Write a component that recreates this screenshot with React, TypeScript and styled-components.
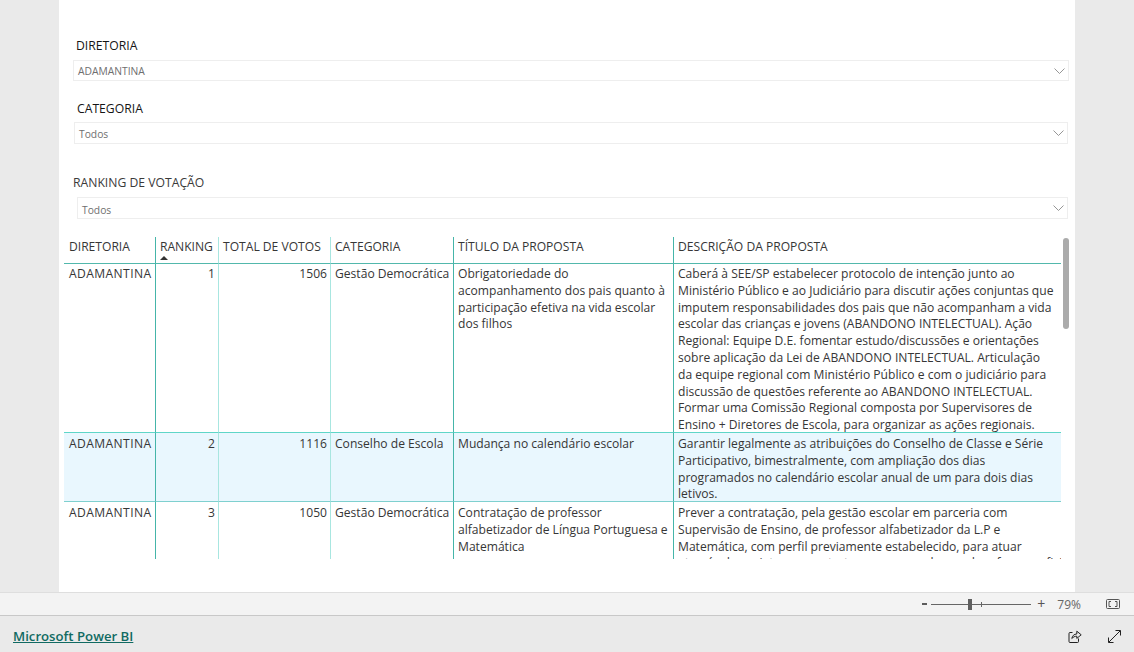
import styled, { createGlobalStyle } from "styled-components";

const GlobalStyle = createGlobalStyle`
  html, body {
    margin: 0;
    padding: 0;
    width: 1134px;
    height: 652px;
    overflow: hidden;
    background: #eaeaea;
    font-family: "Open Sans", "Liberation Sans", sans-serif;
  }
`;

const Shell = styled.div`
  display: flex;
  flex-direction: column;
  width: 1134px;
  height: 652px;
`;

const Stage = styled.main`
  flex: none;
  height: 592px;
  display: flex;
  justify-content: center;
`;

const Canvas = styled.div`
  width: 1016px;
  height: 592px;
  background: #fff;
  box-sizing: border-box;
  padding: 37px 6px 0 5px;
  overflow: hidden;
`;

const Slicer = styled.section<{ $boxLeft: number; $boxRight: number; $gap: number }>`
  margin-bottom: ${(p) => p.$gap}px;
  padding: 0 ${(p) => p.$boxRight}px 0 ${(p) => p.$boxLeft}px;
`;

const SlicerLabel = styled.h3<{ $indent: number; $below: number; $muted?: boolean }>`
  margin: 0 0 ${(p) => p.$below}px ${(p) => p.$indent}px;
  font-size: 12.2px;
  line-height: 17px;
  font-weight: 400;
  color: ${(p) => (p.$muted ? "#3a3a3a" : "#151515")};
  white-space: nowrap;
`;

const SelectBox = styled.div<{ $height: number }>`
  height: ${(p) => p.$height}px;
  box-sizing: border-box;
  border: 1px solid #eeeeee;
  display: flex;
  align-items: center;
  justify-content: space-between;
  padding: 0 3px 0 4px;
  font-size: 10.3px;
  color: #6f6f6f;
`;

const SelectValue = styled.span<{ $drop: number }>`
  padding-top: ${(p) => p.$drop}px;
`;

const Chevron = () => (
  <svg width="11" height="6" viewBox="0 0 11 6" fill="none">
    <path d="M0.5 0.5L5.5 5.5L10.5 0.5" stroke="#8a8a8a" strokeWidth="0.9" />
  </svg>
);

const TableFrame = styled.div`
  position: relative;
  height: 322px;
  width: 1005px;
  overflow: hidden;
`;

const Table = styled.table`
  table-layout: fixed;
  width: 997px;
  border-collapse: separate;
  border-spacing: 0;
  font-size: 12.1px;
  line-height: 16.8px;
  color: #363636;
`;

type LineKind = "dark" | "light" | "none";

const lineFor = (kind: LineKind) =>
  kind === "dark" ? "1px solid #45b5a9" : kind === "light" ? "1px solid #a8e6e0" : "0";

const HeadCell = styled.th<{ $line: LineKind }>`
  height: 27px;
  padding: 2px 3px 0 4px;
  box-sizing: border-box;
  vertical-align: top;
  text-align: left;
  font-weight: 400;
  white-space: nowrap;
  position: relative;
  border-bottom: 1px solid #52b8ac;
  border-right: ${(p) => lineFor(p.$line)};

  &:first-child {
    padding-left: 5px;
  }
`;

const SortMark = styled.span`
  position: absolute;
  left: 4px;
  bottom: 3px;
  width: 0;
  height: 0;
  border-left: 4.5px solid transparent;
  border-right: 4.5px solid transparent;
  border-bottom: 4px solid #333;
`;

const Row = styled.tr<{ $alt?: boolean; $top: number }>`
  background: ${(p) => (p.$alt ? "#e9f7fe" : "#fff")};

  & > td {
    padding-top: ${(p) => p.$top}px;
  }
`;

const Cell = styled.td<{ $line: LineKind; $right?: boolean; $sep: string }>`
  padding: 2px 3px 0 4px;
  box-sizing: border-box;
  vertical-align: top;
  white-space: nowrap;
  overflow: hidden;
  text-align: ${(p) => (p.$right ? "right" : "left")};
  border-bottom: 1px solid ${(p) => p.$sep};
  border-right: ${(p) => lineFor(p.$line)};

  &:first-child {
    padding-left: 5px;
  }
`;

const Region = styled.span`
  letter-spacing: 0.4px;
`;

// the last wrapped line sits on the row border in the report, so the block is let to overhang
const CellBody = styled.div`
  margin-bottom: -4px;
`;

const Line = styled.div`
  white-space: nowrap;
`;

const Scrollbar = styled.div`
  position: absolute;
  top: 1px;
  right: 0;
  width: 6px;
  height: 91px;
  border-radius: 3px;
  background: #ababab;
`;

const ZoomBar = styled.div`
  flex: none;
  height: 24px;
  box-sizing: border-box;
  background: #f3f3f3;
  border-top: 1px solid #dedede;
  border-bottom: 1px solid #c8c8c8;
  display: flex;
  align-items: center;
  justify-content: flex-end;
  padding-right: 14px;
  color: #666;
`;

const ZoomMinus = styled.span`
  width: 5px;
  height: 2px;
  margin-right: 4px;
  background: #5c5c5c;
`;

const ZoomPlus = styled.span`
  font-size: 14px;
  line-height: 20px;
  color: #555;
`;

const ZoomTrack = styled.div`
  position: relative;
  width: 100px;
  height: 1px;
  margin-right: 6px;
  background: #666;
`;

const ZoomThumb = styled.span`
  position: absolute;
  left: 37px;
  top: -5px;
  width: 4px;
  height: 11px;
  background: #606060;
`;

const ZoomTick = styled.span`
  position: absolute;
  left: 50px;
  top: -2px;
  width: 1px;
  height: 5px;
  background: #666;
`;

const ZoomValue = styled.span`
  font-size: 12px;
  color: #666;
  margin: 0 25px 0 12px;
`;

const Footer = styled.footer`
  flex: 1;
  display: flex;
  align-items: center;
  justify-content: space-between;
  padding: 4px 13px 0;
  box-sizing: border-box;
`;

const BrandLink = styled.a`
  font-size: 13.2px;
  font-weight: 600;
  color: #116a62;
  text-decoration: underline;
`;

const FooterIcons = styled.div`
  display: flex;
  align-items: center;
  gap: 26px;
`;

const columns = [92, 63, 112, 123, 220, 387];
const headers: { label: string; line: LineKind; sorted?: boolean }[] = [
  { label: "DIRETORIA", line: "dark" },
  { label: "RANKING", line: "light", sorted: true },
  { label: "TOTAL DE VOTOS", line: "light" },
  { label: "CATEGORIA", line: "dark" },
  { label: "TÍTULO DA PROPOSTA", line: "dark" },
  { label: "DESCRIÇÃO DA PROPOSTA", line: "none" },
];

const rows = [
  {
    rank: 1,
    votes: 1506,
    category: "Gestão Democrática",
    height: 169,
    top: 2,
    sep: "#5fd6c8",
    title: [
      "Obrigatoriedade do",
      "acompanhamento dos pais quanto à",
      "participação efetiva na vida escolar",
      "dos filhos",
    ],
    description: [
      "Caberá à SEE/SP estabelecer protocolo de intenção junto ao",
      "Ministério Público e ao Judiciário para discutir ações conjuntas que",
      "imputem responsabilidades dos pais que não acompanham a vida",
      "escolar das crianças e jovens (ABANDONO INTELECTUAL). Ação",
      "Regional: Equipe D.E. fomentar estudo/discussões e orientações",
      "sobre aplicação da Lei de ABANDONO INTELECTUAL. Articulação",
      "da equipe regional com Ministério Público e com o judiciário para",
      "discussão de questões referente ao ABANDONO INTELECTUAL.",
      "Formar uma Comissão Regional composta por Supervisores de",
      "Ensino + Diretores de Escola, para organizar as ações regionais.",
    ],
  },
  {
    rank: 2,
    votes: 1116,
    category: "Conselho de Escola",
    height: 69,
    top: 3,
    sep: "#7fd0cf",
    alt: true,
    title: ["Mudança no calendário escolar"],
    description: [
      "Garantir legalmente as atribuições do Conselho de Classe e Série",
      "Participativo, bimestralmente, com ampliação dos dias",
      "programados no calendário escolar anual de um para dois dias",
      "letivos.",
    ],
  },
  {
    rank: 3,
    votes: 1050,
    category: "Gestão Democrática",
    height: 120,
    top: 3,
    sep: "#fff",
    title: ["Contratação de professor", "alfabetizador de Língua Portuguesa e", "Matemática"],
    description: [
      "Prever a contratação, pela gestão escolar em parceria com",
      "Supervisão de Ensino, de professor alfabetizador da L.P e",
      "Matemática, com perfil previamente estabelecido, para atuar",
      "através de projetos no contraturno, com as classes de reforço e oficinas",
    ],
  },
];

const slicers = [
  { label: "DIRETORIA", value: "ADAMANTINA", indent: 3, below: 6, boxLeft: 9, boxRight: 0, height: 21, gap: 19, drop: 0 },
  { label: "CATEGORIA", value: "Todos", indent: 3, below: 5, boxLeft: 10, boxRight: 1, height: 22, gap: 30, drop: 2 },
  { label: "RANKING DE VOTAÇÃO", value: "Todos", indent: -4, below: 6, boxLeft: 13, boxRight: 1, height: 22, gap: 18, drop: 4, muted: true },
];

export default function App() {
  return (
    <Shell>
      <GlobalStyle />
      <Stage>
        <Canvas>
          {slicers.map((s) => (
            <Slicer key={s.label} $boxLeft={s.boxLeft} $boxRight={s.boxRight} $gap={s.gap}>
              <SlicerLabel $indent={s.indent} $below={s.below} $muted={s.muted}>
                {s.label}
              </SlicerLabel>
              <SelectBox $height={s.height}>
                <SelectValue $drop={s.drop}>{s.value}</SelectValue>
                <Chevron />
              </SelectBox>
            </Slicer>
          ))}
          <TableFrame>
            <Table>
              <colgroup>
                {columns.map((w, i) => (
                  <col key={i} style={{ width: w }} />
                ))}
              </colgroup>
              <thead>
                <tr>
                  {headers.map((h) => (
                    <HeadCell key={h.label} $line={h.line}>
                      {h.label}
                      {h.sorted ? <SortMark /> : null}
                    </HeadCell>
                  ))}
                </tr>
              </thead>
              <tbody>
                {rows.map((r) => (
                  <Row key={r.rank} $alt={r.alt} $top={r.top} style={{ height: r.height }}>
                    <Cell $line="dark" $sep={r.sep}>
                      <Region>ADAMANTINA</Region>
                    </Cell>
                    <Cell $line="light" $right $sep={r.sep}>
                      {r.rank}
                    </Cell>
                    <Cell $line="light" $right $sep={r.sep}>
                      {r.votes}
                    </Cell>
                    <Cell $line="dark" $sep={r.sep}>
                      {r.category}
                    </Cell>
                    <Cell $line="dark" $sep={r.sep}>
                      <CellBody>
                        {r.title.map((t) => (
                          <Line key={t}>{t}</Line>
                        ))}
                      </CellBody>
                    </Cell>
                    <Cell $line="none" $sep={r.sep}>
                      <CellBody>
                        {r.description.map((t) => (
                          <Line key={t}>{t}</Line>
                        ))}
                      </CellBody>
                    </Cell>
                  </Row>
                ))}
              </tbody>
            </Table>
            <Scrollbar />
          </TableFrame>
        </Canvas>
      </Stage>
      <ZoomBar>
        <ZoomMinus />
        <ZoomTrack>
          <ZoomThumb />
          <ZoomTick />
        </ZoomTrack>
        <ZoomPlus>+</ZoomPlus>
        <ZoomValue>79%</ZoomValue>
        <svg width="14" height="10" viewBox="0 0 14 10" fill="none" stroke="#555" strokeWidth="1">
          <rect x="0.5" y="0.5" width="13" height="9" rx="1" />
          <path d="M5 2.5H3V7.5H5M9 2.5H11V7.5H9" />
        </svg>
      </ZoomBar>
      <Footer>
        <BrandLink href="#">Microsoft Power BI</BrandLink>
        <FooterIcons>
          <svg width="14" height="13" viewBox="0 0 14 13" fill="none" stroke="#222" strokeWidth="1">
            <path d="M4.5 2.5H2A1 1 0 0 0 1 3.5V11.5A1 1 0 0 0 2 12.5H9.5A1 1 0 0 0 10.5 11.5V8.5" />
            <path d="M3.8 8.5C4.2 5.8 6.2 4 8.8 4V1.2L13.2 4.8L8.8 8.4V6.2C6.8 6.2 5.2 7 3.8 8.5Z" />
          </svg>
          <svg width="13" height="13" viewBox="0 0 13 13" fill="none" stroke="#222" strokeWidth="1">
            <path d="M0.8 12.2L12.2 0.8M7.5 0.5H12.5V5.5M0.5 7.5V12.5H5.5" />
          </svg>
        </FooterIcons>
      </Footer>
    </Shell>
  );
}
